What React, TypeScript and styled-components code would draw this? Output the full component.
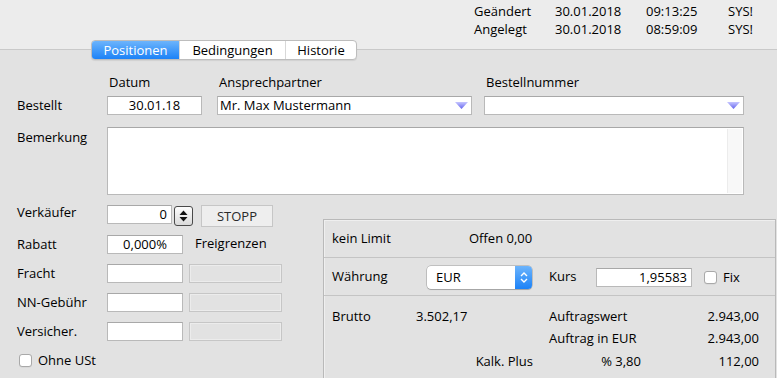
import styled, { createGlobalStyle, css } from "styled-components";

const GlobalStyle = createGlobalStyle`
  html, body {
    margin: 0;
    padding: 0;
  }
  body {
    font-family: "Open Sans", "DejaVu Sans", sans-serif;
    font-size: 13px;
    color: #000;
    background: #e2e2e2;
  }
  * {
    box-sizing: border-box;
  }
`;

function DropArrow() {
  return (
    <svg width="13" height="7" viewBox="0 0 13 7">
      <defs>
        <linearGradient id="lav" x1="0" y1="0" x2="0" y2="1">
          <stop offset="0" stopColor="#c6c6ff" />
          <stop offset="1" stopColor="#6464ee" />
        </linearGradient>
      </defs>
      <polygon points="0,0 13,0 6.5,7" fill="url(#lav)" />
    </svg>
  );
}

function StepperGlyph() {
  return (
    <svg width="9" height="12" viewBox="0 0 9 12">
      <polygon points="4.5,0.5 8.5,5 0.5,5" fill="#111" />
      <polygon points="0.5,7 8.5,7 4.5,11.5" fill="#111" />
    </svg>
  );
}

function PopupChevrons() {
  return (
    <svg width="8" height="13" viewBox="0 0 8 13">
      <polyline points="1,5 4,2 7,5" fill="none" stroke="#fff" strokeWidth="1.4" />
      <polyline points="1,8 4,11 7,8" fill="none" stroke="#fff" strokeWidth="1.4" />
    </svg>
  );
}

export default function App() {
  return (
    <>
      <GlobalStyle />
      <Window>
        <Header>
          <Meta>
            <span>Geändert</span>
            <span>30.01.2018</span>
            <span>09:13:25</span>
            <span>SYS!</span>
            <span>Angelegt</span>
            <span>30.01.2018</span>
            <span>08:59:09</span>
            <span>SYS!</span>
          </Meta>
        </Header>

        <TabBar>
          <Tab $w={87} $active>
            Positionen
          </Tab>
          <Tab $w={106}>Bedingungen</Tab>
          <Tab $w={71}>Historie</Tab>
        </TabBar>

        <HeadRow>
          <HeadCell $w={110}>Datum</HeadCell>
          <HeadCell $w={267}>Ansprechpartner</HeadCell>
          <HeadCell>Bestellnummer</HeadCell>
        </HeadRow>

        <FormRow $mt={5}>
          <Label>Bestellt</Label>
          <Field $w={95} $align="center">
            30.01.18
          </Field>
          <Combo $w={255} $ml={15}>
            <span>Mr. Max Mustermann</span>
            <DropArrow />
          </Combo>
          <Combo $w={260} $ml={12}>
            <span />
            <DropArrow />
          </Combo>
        </FormRow>

        <FormRow $mt={12} $top>
          <Label $pt={2}>Bemerkung</Label>
          <TextArea>
            <TextBody />
            <Scroller />
          </TextArea>
        </FormRow>

        <Lower>
          <LeftColumn>
            <FormRow $top $h={22}>
              <Label $lh={15}>Verkäufer</Label>
              <Field $w={65} $align="right">
                0
              </Field>
              <Stepper>
                <StepperGlyph />
              </Stepper>
              <PushButton>STOPP</PushButton>
            </FormRow>

            <FormRow $mt={8}>
              <Label>Rabatt</Label>
              <Field $w={76} $align="center">
                0,000%
              </Field>
              <Caption>Freigrenzen</Caption>
            </FormRow>

            <FormRow $mt={10}>
              <Label>Fracht</Label>
              <Field $w={76} />
              <Disabled />
            </FormRow>

            <FormRow $mt={10}>
              <Label>NN-Gebühr</Label>
              <Field $w={76} />
              <Disabled />
            </FormRow>

            <FormRow $mt={10}>
              <Label>Versicher.</Label>
              <Field $w={76} />
              <Disabled />
            </FormRow>

            <FormRow $mt={11}>
              <CheckLine $ml={19}>
                <CheckBox />
                Ohne USt
              </CheckLine>
            </FormRow>
          </LeftColumn>

          <Panel>
            <Section $h={37}>
              <PanelText $w={137}>kein Limit</PanelText>
              <PanelText>Offen 0,00</PanelText>
            </Section>

            <Section $h={37}>
              <PanelText $w={95}>Währung</PanelText>
              <Popup>
                <PopupValue>EUR</PopupValue>
                <PopupArrows>
                  <PopupChevrons />
                </PopupArrows>
              </Popup>
              <PanelText $w={47} $ml={17}>
                Kurs
              </PanelText>
              <Field $w={96} $align="right" $mt={2}>
                1,95583
              </Field>
              <CheckLine $ml={12} $mt={2}>
                <CheckBox />
                Fix
              </CheckLine>
            </Section>

            <Totals>
              <span>Brutto</span>
              <span>3.502,17</span>
              <span>Auftragswert</span>
              <Num>2.943,00</Num>

              <span />
              <span />
              <span>Auftrag in EUR</span>
              <Num>2.943,00</Num>

              <KalkLabel>Kalk. Plus</KalkLabel>
              <Num>% 3,80</Num>
              <Num>112,00</Num>
            </Totals>
          </Panel>
        </Lower>
      </Window>
    </>
  );
}

const Window = styled.div`
  width: 777px;
  height: 378px;
  overflow: hidden;
  background: #e2e2e2;
`;

const Header = styled.header`
  height: 50px;
  background: #ececec;
  border-bottom: 1px solid #c9c9c9;
  display: flex;
  justify-content: flex-end;
  padding: 2px 24px 0 0;
`;

const Meta = styled.div`
  display: grid;
  grid-template-columns: 81px 91px 82px 25px;
  grid-auto-rows: 18px;
  line-height: 18px;
  white-space: nowrap;
`;

const TabBar = styled.div`
  display: flex;
  width: max-content;
  height: 20px;
  margin: -10px 0 0 91px;
  background: #fff;
  border: 1px solid #bdbdbd;
  border-radius: 4px;
  box-shadow: 0 1px 1px rgba(0, 0, 0, 0.08);
  overflow: hidden;
`;

const Tab = styled.div<{ $w: number; $active?: boolean }>`
  width: ${(p) => p.$w}px;
  line-height: 18px;
  text-align: center;
  border-left: 1px solid #d8d8d8;

  &:first-child {
    border-left: none;
  }

  ${(p) =>
    p.$active &&
    css`
      background: linear-gradient(#6cb4fc, #1c82f7);
      color: #fff;
    `}
`;

const HeadRow = styled.div`
  display: flex;
  margin: 14px 0 0 107px;
  line-height: 17px;
`;

const HeadCell = styled.div<{ $w?: number }>`
  width: ${(p) => (p.$w ? `${p.$w}px` : "auto")};
  padding-left: 2px;
`;

const FormRow = styled.div<{ $mt?: number; $top?: boolean; $h?: number }>`
  display: flex;
  align-items: ${(p) => (p.$top ? "flex-start" : "center")};
  margin-top: ${(p) => p.$mt ?? 0}px;
  height: ${(p) => (p.$h ? `${p.$h}px` : "auto")};
`;

const Label = styled.div<{ $pt?: number; $lh?: number }>`
  width: 107px;
  flex: none;
  padding: ${(p) => p.$pt ?? 0}px 0 0 17px;
  line-height: ${(p) => p.$lh ?? 17}px;
  white-space: nowrap;
`;

const Field = styled.div<{ $w: number; $align?: string; $mt?: number }>`
  width: ${(p) => p.$w}px;
  height: 19px;
  flex: none;
  margin-top: ${(p) => p.$mt ?? 0}px;
  padding: 0 4px;
  background: #fff;
  border: 1px solid #b9b9b9;
  border-top-color: #a8a8a8;
  line-height: 17px;
  text-align: ${(p) => p.$align ?? "left"};
`;

const Combo = styled.div<{ $w: number; $ml: number }>`
  width: ${(p) => p.$w}px;
  height: 19px;
  margin-left: ${(p) => p.$ml}px;
  padding: 0 3px 0 2px;
  display: flex;
  align-items: center;
  justify-content: space-between;
  background: #fff;
  border: 1px solid #b9b9b9;
  border-top-color: #a8a8a8;
  line-height: 17px;
`;

const TextArea = styled.div`
  width: 637px;
  height: 68px;
  display: flex;
  padding: 1px 1px 1px 0;
  background: #fff;
  border: 1px solid #b9b9b9;
  border-top-color: #a8a8a8;
`;

const TextBody = styled.div`
  flex: 1;
`;

const Scroller = styled.div`
  width: 15px;
  background: #f8f8f8;
  border-left: 1px solid #ececec;
`;

const Lower = styled.div`
  display: flex;
  margin-top: 10px;
`;

const LeftColumn = styled.div`
  width: 323px;
  flex: none;
`;

const Stepper = styled.div`
  width: 19px;
  height: 20px;
  margin: 1px 0 0 2px;
  display: flex;
  align-items: center;
  justify-content: center;
  border: 1px solid #4a4a4a;
  border-radius: 3px;
  background: linear-gradient(#fdfdfd, #dadada);
`;

const PushButton = styled.div`
  width: 72px;
  height: 22px;
  margin-left: 8px;
  background: #eeeeee;
  border: 1px solid #c6c6c6;
  color: #2a2a2a;
  line-height: 20px;
  text-align: center;
`;

const Caption = styled.div`
  margin-left: 12px;
  line-height: 17px;
  margin-top: -3px;
`;

const Disabled = styled.div`
  width: 93px;
  height: 19px;
  margin-left: 6px;
  border: 1px solid #c6c6c6;
  box-shadow: inset 0 0 0 1px #ececec;
`;

const CheckLine = styled.label<{ $ml?: number; $mt?: number }>`
  display: flex;
  align-items: center;
  gap: 6px;
  margin: ${(p) => p.$mt ?? 0}px 0 0 ${(p) => p.$ml ?? 0}px;
  line-height: 17px;
`;

const CheckBox = styled.span`
  width: 13px;
  height: 13px;
  background: #fff;
  border: 1px solid #a9a9a9;
  border-radius: 3px;
  box-shadow: 0 0.5px 0.5px rgba(0, 0, 0, 0.08);
`;

const Panel = styled.div`
  width: 453px;
  height: 200px;
  margin-top: 14px;
  border: 1px solid #b9b9b9;
  box-shadow: inset 1px 1px 0 #efefef;
`;

const Section = styled.div<{ $h?: number }>`
  height: ${(p) => (p.$h ? `${p.$h}px` : "auto")};
  display: flex;
  align-items: center;
  padding-left: 8px;

  & + & {
    height: ${(p) => (p.$h ? `${p.$h + 1}px` : "auto")};
    border-top: 1px solid #c4c4c4;
  }
`;

const PanelText = styled.span<{ $w?: number; $ml?: number }>`
  width: ${(p) => (p.$w ? `${p.$w}px` : "auto")};
  margin-left: ${(p) => p.$ml ?? 0}px;
  flex: none;
  line-height: 17px;
`;

const Popup = styled.div`
  width: 105px;
  height: 23px;
  display: flex;
  background: #fff;
  border-radius: 4px;
  box-shadow: 0 0 0 0.5px rgba(0, 0, 0, 0.3), 0 1px 1px rgba(0, 0, 0, 0.15);
  margin-top: 1px;
`;

const PopupValue = styled.div`
  flex: 1;
  padding-left: 9px;
  line-height: 23px;
`;

const PopupArrows = styled.div`
  width: 17px;
  display: flex;
  align-items: center;
  justify-content: center;
  border-radius: 0 4px 4px 0;
  background: linear-gradient(#6cb4fc, #1c82f7);
`;

const Totals = styled.div`
  display: grid;
  grid-template-columns: 84px 133px 92px 118px;
  grid-auto-rows: 22.5px;
  align-items: center;
  padding: 9px 0 0 8px;
  border-top: 1px solid #c4c4c4;
  line-height: 17px;
  white-space: nowrap;
`;

const Num = styled.span`
  text-align: right;
`;

const KalkLabel = styled.span`
  grid-column: 1 / 3;
  text-align: right;
  padding-right: 16px;
`;
